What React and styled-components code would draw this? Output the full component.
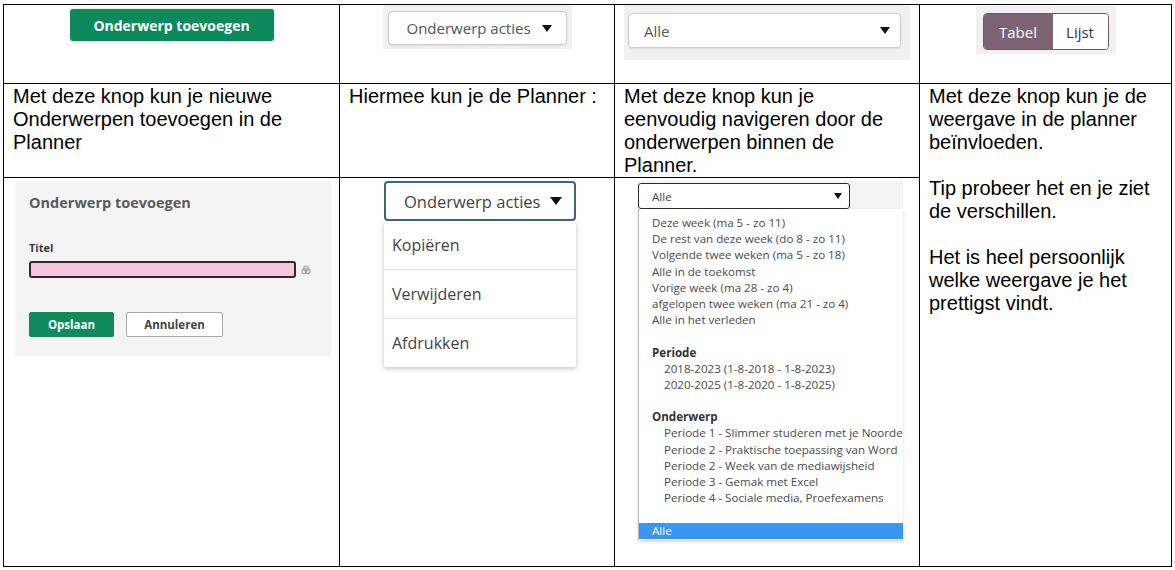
import React from 'react';
import styled, { createGlobalStyle } from 'styled-components';

const GlobalStyle = createGlobalStyle`
  body {
    margin: 0;
    background: #fff;
    font-family: "Liberation Sans", Arial, sans-serif;
  }
`;

const Page = styled.div`
  padding: 4px 0 0 3px;
`;

const Grid = styled.table`
  border-collapse: collapse;
  table-layout: fixed;
  width: 1168px;
`;

const Row = styled.tr`
  height: ${p => p.$h}px;
`;

const Cell = styled.td`
  border: 1px solid #000;
  vertical-align: top;
  padding: 0;
  text-align: ${p => (p.$center ? 'center' : 'left')};
`;

const TextCell = styled(Cell)`
  padding: 1px 8px 0 9px;
  font-size: 20px;
  line-height: 23px;
  color: #000;
`;

const Para = styled.p`
  margin: 0 0 23px;
`;

/* ---- first row: controls ---- */

const PrimaryButton = styled.button`
  margin-top: 4px;
  width: 204px;
  height: 32px;
  border: none;
  border-radius: 3px;
  background: #0c8a5b;
  color: #fff;
  font: 700 14px "Open Sans", sans-serif;
  box-shadow: 0 0 0 1px #eef3f0;
`;

const Tray = styled.div`
  display: inline-flex;
  margin-top: ${p => p.$top || 0}px;
  padding: ${p => p.$pad};
  background: #f1f1f1;
`;

const SelectBox = styled.div`
  display: flex;
  align-items: center;
  justify-content: space-between;
  box-sizing: border-box;
  width: ${p => p.$w}px;
  height: ${p => p.$h}px;
  padding: 0 ${p => p.$pr}px 0 ${p => p.$pl}px;
  background: #fff;
  border: 1px solid #cdcdcd;
  border-radius: 4px;
  box-shadow: 0 1px 2px rgba(0, 0, 0, 0.08);
  color: #555;
  font: 15px "Open Sans", sans-serif;
`;

const Caret = styled.span`
  width: 0;
  height: 0;
  border-left: ${p => p.$s || 5}px solid transparent;
  border-right: ${p => p.$s || 5}px solid transparent;
  border-top: ${p => (p.$s || 5) + 2}px solid #111;
`;

const Toggle = styled.div`
  display: flex;
  box-sizing: border-box;
  height: 37px;
  border: 1px solid #6f5767;
  border-radius: 4px;
  overflow: hidden;
`;

const ToggleOption = styled.div`
  display: flex;
  align-items: center;
  justify-content: center;
  width: ${p => p.$w}px;
  background: ${p => (p.$active ? '#7b6373' : '#fff')};
  color: ${p => (p.$active ? '#fff' : '#333')};
  font: 15px "Open Sans", sans-serif;
`;

/* ---- third row, column 1: add form ---- */

const FormPanel = styled.div`
  display: flex;
  flex-direction: column;
  box-sizing: border-box;
  height: 175px;
  margin: 3px 8px 0 11px;
  padding: 12px 14px 0;
  background: #f4f4f4;
  font-family: "Open Sans", sans-serif;
`;

const FormTitle = styled.div`
  font-size: 14.5px;
  font-weight: 700;
  line-height: 20px;
  color: #5b5b5b;
`;

const FieldLabel = styled.div`
  margin-top: 28px;
  font-size: 11px;
  font-weight: 700;
  line-height: 14px;
  color: #3a3a3a;
`;

const FieldRow = styled.div`
  display: flex;
  align-items: center;
  gap: 5px;
  margin-top: 6px;
`;

const PinkInput = styled.div`
  box-sizing: border-box;
  width: 267px;
  height: 17px;
  background: #f8c6db;
  border: 2px solid #2f2a2c;
  border-radius: 3px;
`;

const ButtonRow = styled.div`
  display: flex;
  gap: 12px;
  margin-top: 34px;
`;

const SmallButton = styled.div`
  display: flex;
  align-items: center;
  justify-content: center;
  box-sizing: border-box;
  width: ${p => p.$w}px;
  height: 25px;
  border-radius: 2px;
  font-size: 11.5px;
  font-weight: 700;
  background: ${p => (p.$primary ? '#0e8a5c' : '#fff')};
  color: ${p => (p.$primary ? '#fff' : '#444')};
  border: 1px solid ${p => (p.$primary ? '#0e8a5c' : '#a9a9a9')};
`;

/* ---- third row, column 2: actions menu ---- */

const ActionsWrap = styled.div`
  width: 192px;
  margin: 3px 0 0 44px;
  font-family: "Open Sans", sans-serif;
`;

const ActionsSelect = styled.div`
  display: flex;
  align-items: center;
  justify-content: space-between;
  box-sizing: border-box;
  height: 40px;
  padding: 0 12px 0 18px;
  border: 2px solid #3b6683;
  border-radius: 4px;
  background: #fff;
  font-size: 16.5px;
  color: #444;
`;

const ActionsMenu = styled.div`
  background: #fff;
  box-shadow: 0 2px 5px rgba(0, 0, 0, 0.22);
  border-radius: 0 0 3px 3px;
`;

const ActionItem = styled.div`
  display: flex;
  align-items: center;
  height: 48px;
  padding-left: 8px;
  border-top: ${p => (p.$first ? 'none' : '1px solid #e4e4e4')};
  font-size: 16px;
  color: #444;
`;

/* ---- third row, column 3: filter list ---- */

const FilterWrap = styled.div`
  width: 265px;
  margin: 3px 0 0 23px;
  font-family: "Open Sans", sans-serif;
`;

const FilterHead = styled.div`
  display: flex;
  padding-top: 2px;
  background: #f3f3f3;
`;

const FilterSelect = styled.div`
  display: flex;
  align-items: center;
  justify-content: space-between;
  box-sizing: border-box;
  width: 212px;
  height: 26px;
  padding: 0 7px 0 13px;
  border: 1.5px solid #2b2b2b;
  border-radius: 3px;
  background: #fff;
  font-size: 11.6px;
  color: #444;
`;

const FilterList = styled.div`
  box-sizing: border-box;
  height: 331px;
  padding-top: 6px;
  overflow: hidden;
  white-space: nowrap;
  border-left: 1px solid #b9b9b9;
  box-shadow: 0 2px 3px rgba(0, 0, 0, 0.15);
  background: #fff;
`;

const Option = styled.div`
  height: 16.2px;
  line-height: 16.2px;
  padding-left: ${p => (p.$indent ? 25 : 13)}px;
  font-size: 11.6px;
  font-weight: ${p => (p.$group ? 700 : 400)};
  color: ${p => (p.$selected ? '#fff' : p.$group ? '#333' : '#4a4a4a')};
  background: ${p => (p.$selected ? '#3897f5' : 'transparent')};
`;

const Gap = styled.div`
  height: 16.2px;
`;

const LinkIcon = () => (
  <svg width="10" height="10" viewBox="0 0 10 10">
    <g fill="none" stroke="#a6a6a6" strokeWidth="1.2">
      <circle cx="3.3" cy="6.3" r="2.4" />
      <circle cx="6.7" cy="6.3" r="2.4" />
      <circle cx="5" cy="3.4" r="2.4" />
    </g>
  </svg>
);

const quick = [
  'Deze week (ma 5 - zo 11)',
  'De rest van deze week (do 8 - zo 11)',
  'Volgende twee weken (ma 5 - zo 18)',
  'Alle in de toekomst',
  'Vorige week (ma 28 - zo 4)',
  'afgelopen twee weken (ma 21 - zo 4)',
  'Alle in het verleden',
];

const periods = ['2018-2023 (1-8-2018 - 1-8-2023)', '2020-2025 (1-8-2020 - 1-8-2025)'];

const topics = [
  'Periode 1 - Slimmer studeren met je Noorde',
  'Periode 2 - Praktische toepassing van Word',
  'Periode 2 - Week van de mediawijsheid',
  'Periode 3 - Gemak met Excel',
  'Periode 4 - Sociale media, Proefexamens',
];

const App = () => {
  return (
    <Page>
      <GlobalStyle />
      <Grid>
        <colgroup>
          <col style={{ width: 336 }} />
          <col style={{ width: 275 }} />
          <col style={{ width: 305 }} />
          <col style={{ width: 252 }} />
        </colgroup>
        <tbody>
          <Row $h={79}>
            <Cell $center>
              <PrimaryButton>Onderwerp toevoegen</PrimaryButton>
            </Cell>
            <Cell $center>
              <Tray $pad="6px 5px 4px">
                <SelectBox $w={179} $h={34} $pl={18} $pr={14}>
                  Onderwerp acties <Caret />
                </SelectBox>
              </Tray>
            </Cell>
            <Cell $center>
              <Tray $pad="8px 9px 12px 4px">
                <SelectBox $w={273} $h={35} $pl={15} $pr={10}>
                  Alle <Caret />
                </SelectBox>
              </Tray>
            </Cell>
            <Cell $center>
              <Tray $top={1} $pad="7px 7px 4px">
                <Toggle>
                  <ToggleOption $active $w={69}>Tabel</ToggleOption>
                  <ToggleOption $w={55}>Lijst</ToggleOption>
                </Toggle>
              </Tray>
            </Cell>
          </Row>
          <Row $h={93}>
            <TextCell>Met deze knop kun je nieuwe Onderwerpen toevoegen in de Planner</TextCell>
            <TextCell>Hiermee kun je de Planner :</TextCell>
            <TextCell>Met deze knop kun je eenvoudig navigeren door de onderwerpen binnen de Planner.</TextCell>
            <TextCell rowSpan={2}>
              <Para>Met deze knop kun je de weergave in de planner beïnvloeden.</Para>
              <Para>Tip probeer het en je ziet de verschillen.</Para>
              <Para>Het is heel persoonlijk welke weergave je het prettigst vindt.</Para>
            </TextCell>
          </Row>
          <Row $h={389}>
            <Cell>
              <FormPanel>
                <FormTitle>Onderwerp toevoegen</FormTitle>
                <FieldLabel>Titel</FieldLabel>
                <FieldRow>
                  <PinkInput />
                  <LinkIcon />
                </FieldRow>
                <ButtonRow>
                  <SmallButton $primary $w={85}>Opslaan</SmallButton>
                  <SmallButton $w={97}>Annuleren</SmallButton>
                </ButtonRow>
              </FormPanel>
            </Cell>
            <Cell>
              <ActionsWrap>
                <ActionsSelect>
                  Onderwerp acties <Caret $s={6} />
                </ActionsSelect>
                <ActionsMenu>
                  <ActionItem $first>Kopiëren</ActionItem>
                  <ActionItem>Verwijderen</ActionItem>
                  <ActionItem>Afdrukken</ActionItem>
                </ActionsMenu>
              </ActionsWrap>
            </Cell>
            <Cell>
              <FilterWrap>
                <FilterHead>
                  <FilterSelect>
                    Alle <Caret $s={4} />
                  </FilterSelect>
                </FilterHead>
                <FilterList>
                  {quick.map(q => (
                    <Option key={q}>{q}</Option>
                  ))}
                  <Gap />
                  <Option $group>Periode</Option>
                  {periods.map(p => (
                    <Option key={p} $indent>{p}</Option>
                  ))}
                  <Gap />
                  <Option $group>Onderwerp</Option>
                  {topics.map(t => (
                    <Option key={t} $indent>{t}</Option>
                  ))}
                  <Gap />
                  <Option $selected>Alle</Option>
                </FilterList>
              </FilterWrap>
            </Cell>
          </Row>
        </tbody>
      </Grid>
    </Page>
  );
};

export default App;
